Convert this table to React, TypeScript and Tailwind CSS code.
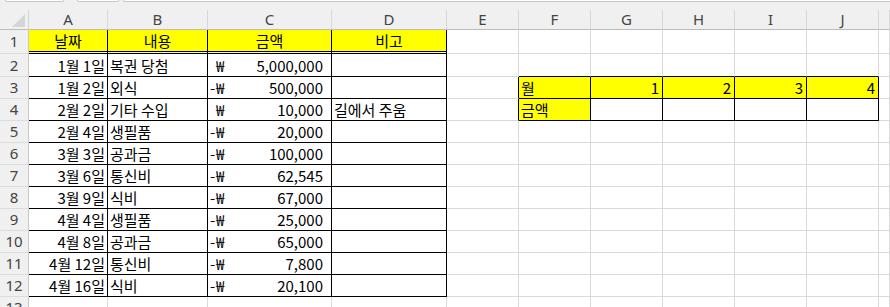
import React from "react";

const COL_LETTERS = ["A", "B", "C", "D", "E", "F", "G", "H", "I", "J", ""];
const ROW_COUNT = 13;

type Entry = {
  date: string;
  item: string;
  neg: boolean;
  amount: number;
  note?: string;
};

const ENTRIES: Entry[] = [
  { date: "1월 1일", item: "복권 당첨", neg: false, amount: 5000000 },
  { date: "1월 2일", item: "외식", neg: true, amount: 500000 },
  { date: "2월 2일", item: "기타 수입", neg: false, amount: 10000, note: "길에서 주움" },
  { date: "2월 4일", item: "생필품", neg: true, amount: 20000 },
  { date: "3월 3일", item: "공과금", neg: true, amount: 100000 },
  { date: "3월 6일", item: "통신비", neg: true, amount: 62545 },
  { date: "3월 9일", item: "식비", neg: true, amount: 67000 },
  { date: "4월 4일", item: "생필품", neg: true, amount: 25000 },
  { date: "4월 8일", item: "공과금", neg: true, amount: 65000 },
  { date: "4월 12일", item: "통신비", neg: true, amount: 7800 },
  { date: "4월 16일", item: "식비", neg: true, amount: 20100 },
];

const HEADINGS = ["날짜", "내용", "금액", "비고"];

// ledger block A1:D12 and the monthly summary block F3:J4
const inLedger = (c: number, r: number) => c >= 1 && c <= 4 && r >= 1 && r <= 12;
const inSummary = (c: number, r: number) => c >= 6 && c <= 10 && r >= 3 && r <= 4;
const boxed = (c: number, r: number) => inLedger(c, r) || inSummary(c, r);

const isYellow = (c: number, r: number) =>
  (r === 1 && c >= 1 && c <= 4) || (r === 3 && c >= 6 && c <= 10) || (r === 4 && c === 6);

const fmt = (n: number) => n.toLocaleString("en-US");

function CellContent({ c, r }: { c: number; r: number }) {
  if (r === 1 && c >= 1 && c <= 4) {
    return <div className="flex h-full items-center justify-center">{HEADINGS[c - 1]}</div>;
  }
  if (r >= 2 && r <= 12) {
    const e = ENTRIES[r - 2];
    if (c === 1) return <div className="flex h-full items-center justify-end pr-[2px]">{e.date}</div>;
    if (c === 2) return <div className="flex h-full items-center pl-[2px]">{e.item}</div>;
    if (c === 3)
      return (
        <div className="flex h-full items-center pl-[2px] pr-[8px]">
          <span className="w-[6px]">{e.neg ? "-" : ""}</span>
          <span>₩</span>
          <span className="flex-1 text-right">{fmt(e.amount)}</span>
        </div>
      );
    if (c === 4 && e.note) return <div className="flex h-full items-center pl-[2px]">{e.note}</div>;
  }
  if (r === 3 && c === 6) return <div className="flex h-full items-center pl-[2px]">월</div>;
  if (r === 3 && c >= 7 && c <= 10)
    return <div className="flex h-full items-center justify-end pr-[3px]">{c - 6}</div>;
  if (r === 4 && c === 6) return <div className="flex h-full items-center pl-[2px]">금액</div>;
  return null;
}

function Cell({ c, r }: { c: number; r: number }) {
  const rightBlack = boxed(c, r) || boxed(c + 1, r);
  const bottomBlack = boxed(c, r) || boxed(c, r + 1);
  const doubleBottom = r === 1 && c >= 1 && c <= 4;
  const cls = [
    "overflow-hidden whitespace-nowrap border-r border-b bg-clip-padding",
    rightBlack ? "border-r-black" : "border-r-[#dadada]",
    doubleBottom
      ? "border-b-[3px] border-double border-b-black"
      : bottomBlack
      ? "border-b-black"
      : "border-b-[#dadada]",
    isYellow(c, r) ? "bg-[#ffff00]" : "bg-white",
  ].join(" ");
  return (
    <div className={cls}>
      <CellContent c={c} r={r} />
    </div>
  );
}

export default function App() {
  const rows = Array.from({ length: ROW_COUNT }, (_, i) => i + 1);
  return (
    <div className="h-[307px] w-[890px] overflow-hidden bg-[#f0f0f0] font-['Noto_Sans_CJK_KR',sans-serif] text-[15px] leading-none text-black">
      {/* name box / buttons / formula bar edges */}
      <div className="flex h-[10px] items-start">
        <div className="ml-[5px] h-[2px] w-[59px] rounded-b-[3px] border-x border-b border-[#c6c6c6] bg-white" />
        <div className="ml-[13px] h-[2px] w-[42px] rounded-b-[3px] border-x border-b border-[#c6c6c6] bg-white" />
        <div className="ml-[4px] h-[2px] flex-1 rounded-bl-[3px] border-l border-b border-[#c6c6c6] bg-white" />
      </div>

      <div className="grid grid-cols-[29px_79px_100px_124px_115px_72px_72px_72px_72px_72px_72px_1fr] grid-rows-[20px_24px_23px_repeat(11,22px)]">
        {/* select-all corner */}
        <div className="flex items-end justify-end border-r border-b border-r-[#d4d4d4] border-b-[#bcbcbc] pb-[2px] pr-[3px]">
          <svg width="13" height="13" viewBox="0 0 13 13">
            <polygon points="0,13 13,13 13,0" fill="#d6d6d6" />
          </svg>
        </div>
        {COL_LETTERS.map((l, i) => (
          <div
            key={i}
            className="flex items-center justify-center border-r border-b border-r-[#d8d8d8] border-b-[#bcbcbc] font-['Noto_Sans',sans-serif] text-[15px] text-[#444]"
          >
            {l}
          </div>
        ))}

        {rows.map((r) => (
          <React.Fragment key={r}>
            <div className="flex items-center justify-center border-r border-b border-r-[#c8c8c8] border-b-[#dcdcdc] font-['Noto_Sans',sans-serif] text-[15px] text-[#444]">
              {r}
            </div>
            {COL_LETTERS.map((_, i) => (
              <Cell key={i} c={i + 1} r={r} />
            ))}
          </React.Fragment>
        ))}
      </div>
    </div>
  );
}
